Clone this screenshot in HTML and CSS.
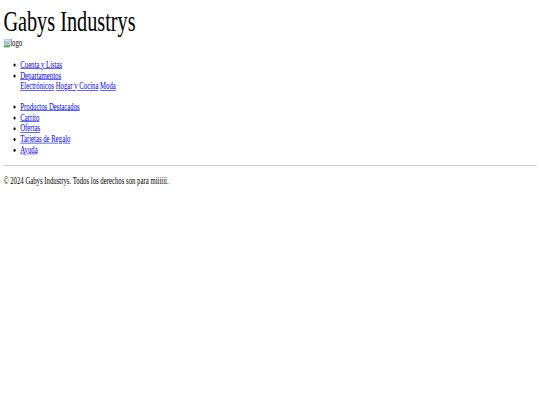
FILE: index.html
```html
<!DOCTYPE html>
<html lang="es">
<head>
<meta charset="utf-8">
<title>Gabys Industrys</title>
<link rel="stylesheet" href="styles.css">
</head>
<body>
<div class="frame">
<div class="page">
  <header class="site-header">
    <h1 class="site-title">Gabys Industrys</h1>
    <div class="logo-row">
      <span class="logo" role="img" aria-label="logo"><svg class="broken-icon" width="16" height="16" viewBox="0 0 16 16" aria-hidden="true">
          <path d="M1.5 1.5 H14.5 V8 L11 10.5 L8 8.5 L4.5 11 L1.5 9 Z" fill="#dfe9f2" stroke="#8a9aa8" stroke-width="1"/>
          <path d="M2 6 L6 3 L9 6 L12 4 L14 6 V7.7 L11 10 L8 8 L4.5 10.4 L2 8.7 Z" fill="#9fc0dc"/>
          <path d="M1.5 11 L4.5 13 L8 10.5 L11 12.5 L14.5 10 V14.5 H1.5 Z" fill="#5fae4a" stroke="#4d8a3c" stroke-width="1"/>
        </svg>logo</span>
    </div>
    <nav class="top-nav">
      <ul class="nav-list">
        <li><a href="#">Cuenta y Listas</a></li>
        <li><a href="#">Departamentos</a>
          <div class="sub-links"><a href="#">Electrónicos</a> <a href="#">Hogar y Cocina</a> <a href="#">Moda</a></div>
        </li>
      </ul>
    </nav>
  </header>
  <main>
    <ul class="nav-list">
      <li><a href="#">Productos Destacados</a></li>
      <li><a href="#">Carrito</a></li>
      <li><a href="#">Ofertas</a></li>
      <li><a href="#">Tarjetas de Regalo</a></li>
      <li><a href="#">Ayuda</a></li>
    </ul>
  </main>
  <hr class="divider">
  <footer class="site-footer">
    <p class="copyright">© 2024 Gabys Industrys. Todos los derechos son para miiiiii.</p>
  </footer>
</div>
</div>
</body>
</html>
```

FILE: styles.css
```css
html, body {
  margin: 0;
  padding: 0;
  background: #ffffff;
}

.frame {
  width: 100%;
  height: 100vh;
  overflow: hidden;
}

/* The reference is a 1280px-wide page photographed into a 540x405 frame:
   horizontally 540/1280, vertically 0.6. */
.page {
  width: 1280px;
  box-sizing: border-box;
  padding: 8px;
  font-family: "Liberation Serif", "Times New Roman", serif;
  font-size: 16px;
  color: #000000;
  transform: scale(0.421875, 0.6);
  transform-origin: 0 0;
}

.site-title {
  margin: 0;
  font-size: 48px;
  font-weight: normal;
}

.logo-row {
  height: 19.6px;
  line-height: normal;
}

.broken-icon {
  vertical-align: text-bottom;
}

.nav-list {
  margin: 16px 0;
  padding-left: 40px;
  list-style: disc;
}

a {
  color: #0000ee;
  text-decoration: underline;
}

.divider {
  margin: 8px 0;
  border: 0;
  border-top: 1px solid #9a9a9a;
  border-bottom: 1px solid #eeeeee;
  height: 0;
}

.copyright {
  margin: 16px 0;
}
```
